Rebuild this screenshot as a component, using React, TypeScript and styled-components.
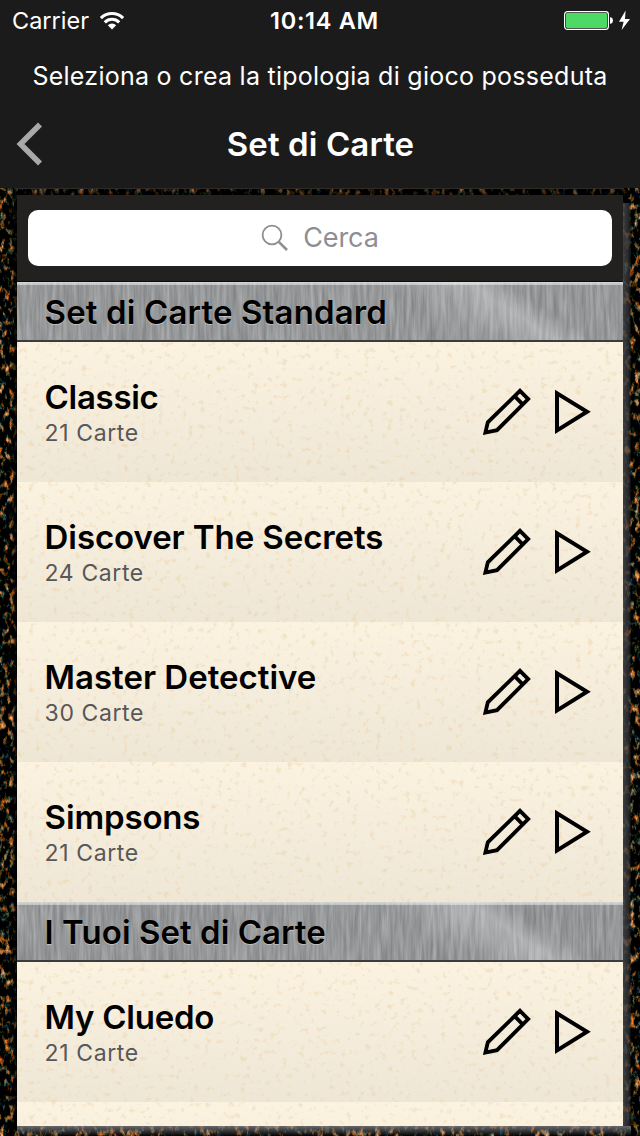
import React from 'react';
import styled, { createGlobalStyle } from 'styled-components';

const GlobalStyle = createGlobalStyle`
  * { box-sizing: border-box; }
  body { margin: 0; background: #050403; font-family: Inter, "Liberation Sans", sans-serif; }
`;

const Screen = styled.main`
  width: 640px;
  height: 1136px;
  overflow: hidden;
  display: flex;
  flex-direction: column;
  background: #1b1b1b;
`;

const StatusBar = styled.div`
  height: 41px;
  padding: 0 9px 0 12px;
  display: grid;
  grid-template-columns: 1fr auto 1fr;
  align-items: center;
  color: #fff;
`;

const StatusGroup = styled.div<{ $end?: boolean }>`
  display: flex;
  align-items: center;
  justify-content: ${(p) => (p.$end ? 'flex-end' : 'flex-start')};
`;

const Label = styled.span<{ $size: number; $weight?: number; $spacing?: number; $color?: string }>`
  font-size: ${(p) => p.$size}px;
  font-weight: ${(p) => p.$weight ?? 400};
  letter-spacing: ${(p) => p.$spacing ?? 0}px;
  color: ${(p) => p.$color ?? '#fff'};
  line-height: 1.2;
  white-space: nowrap;
`;

const Clock = styled(Label)`
  padding: 2px 0 0 6px;
`;

const Carrier = styled(Label)`
  padding-top: 2px;
`;

const Prompt = styled.div`
  height: 71px;
  padding-bottom: 2px;
  display: flex;
  align-items: center;
  justify-content: center;
`;

const NavBar = styled.header`
  height: 76px;
  padding: 0 16px 12px;
  display: grid;
  grid-template-columns: 28px 1fr 28px;
  align-items: center;
  justify-items: center;
`;

const NavTitle = styled(Label)`
  padding: 1px 0 0 1px;
`;

const Stage = styled.div`
  position: relative;
  flex: 1;
  padding: 7px 17px 10px 17px;
  background: #060403;
  overflow: hidden;
`;

const Texture = styled.svg`
  position: absolute;
  inset: 0;
  width: 100%;
  height: 100%;
  pointer-events: none;
`;

const TopShade = styled.div`
  position: absolute;
  inset: 0 16px auto 14px;
  height: 8px;
  border-top: 1px solid #2e2a28;
  background: linear-gradient(rgba(0, 0, 0, 0.35), rgba(0, 0, 0, 0.7));
`;

const LeftShade = styled.div`
  position: absolute;
  inset: 7px auto 10px 11px;
  width: 6px;
  background: linear-gradient(90deg, transparent, rgba(0, 0, 0, 0.9));
`;

const RightBevel = styled.div`
  position: absolute;
  right: 9px;
  top: 15px;
  bottom: 10px;
  width: 8px;
  background: linear-gradient(90deg, rgba(75, 76, 80, 0.8), rgba(50, 51, 54, 0.75) 70%, rgba(30, 30, 32, 0.3));
`;

const BottomBevel = styled.div`
  position: absolute;
  left: 17px;
  right: 9px;
  bottom: 0;
  height: 10px;
  background: linear-gradient(rgba(130, 130, 135, 0.8), rgba(20, 20, 22, 0.1));
`;

const Panel = styled.section`
  position: relative;
  height: 100%;
  overflow: hidden;
  display: flex;
  flex-direction: column;
`;

const SearchBar = styled.div`
  flex: none;
  height: 87px;
  padding: 15px 11px 16px;
  background: #22211f;
  border-bottom: 1px solid #0c0c0c;
`;

const SearchField = styled.div`
  height: 56px;
  border-radius: 10px;
  background: #fff;
  display: flex;
  align-items: center;
  justify-content: center;
  gap: 14px;
`;

const SectionHeader = styled.h2`
  position: relative;
  flex: none;
  height: 60px;
  margin: 0;
  padding: 3px 0 0 27.6px;
  display: flex;
  align-items: center;
  overflow: hidden;
  background: #939597;
  border-bottom: 2px solid #3c3c3d;
`;

const HeaderGloss = styled.div`
  position: absolute;
  inset: 0;
  background:
    linear-gradient(rgba(255, 255, 255, 0.6), rgba(255, 255, 255, 0.4)) top / 100% 3px no-repeat,
    linear-gradient(34deg, transparent 28%, rgba(255, 255, 255, 0.1) 42%, rgba(255, 255, 255, 0.25) 58%, transparent 70%) 360px 0 / 220px 100% no-repeat;
`;

const HeaderText = styled(Label)`
  position: relative;
  text-shadow: 0 1px 0 rgba(255, 255, 255, 0.4);
`;

const Row = styled.article`
  position: relative;
  flex: none;
  height: 140px;
  padding: 0 32px 0 27.6px;
  display: flex;
  align-items: center;
  justify-content: space-between;
  background: linear-gradient(#fbf2e0, #efe7d6);
`;

const RowText = styled.div`
  position: relative;
  padding-top: 2px;
  display: flex;
  flex-direction: column;
  gap: 2px;
`;

const Actions = styled.div`
  position: relative;
  display: flex;
  align-items: center;
  gap: 24px;
`;

const WoodTexture = () => (
  <Texture>
    <filter id="wood" x="0" y="0" width="100%" height="100%" colorInterpolationFilters="sRGB">
      <feTurbulence type="fractalNoise" baseFrequency="0.2 0.12" numOctaves={4} seed={7} />
      <feColorMatrix values="3.4 0.4 0 0 -1.98  1.7 0.6 0 0 -1.12  0.8 0.7 0 0 -0.74  0 0 0 0 1" />
    </filter>
    <rect width="100%" height="100%" filter="url(#wood)" />
  </Texture>
);

const SteelTexture = ({ seed }: { seed: number }) => (
  <Texture>
    <filter id={`steel${seed}`} x="0" y="0" width="100%" height="100%" colorInterpolationFilters="sRGB">
      <feTurbulence type="fractalNoise" baseFrequency="0.3 0.025" numOctaves={3} seed={seed} />
      <feColorMatrix values="0.24 0 0 0 0.465  0.24 0 0 0 0.473  0.24 0 0 0 0.48  0 0 0 0 1" />
    </filter>
    <rect width="100%" height="100%" filter={`url(#steel${seed})`} />
  </Texture>
);

const PaperTexture = ({ seed }: { seed: number }) => (
  <Texture>
    <filter id={`paper${seed}`} x="0" y="0" width="100%" height="100%" colorInterpolationFilters="sRGB">
      <feTurbulence type="fractalNoise" baseFrequency="0.17" numOctaves={3} seed={seed} />
      <feColorMatrix values="0 0 0 0 0.91  0 0 0 0 0.8  0 0 0 0 0.62  5 0 0 0 -2.95" />
    </filter>
    <rect width="100%" height="100%" opacity="0.38" filter={`url(#paper${seed})`} />
  </Texture>
);

const WifiGlyph = styled.svg`
  margin-left: 10px;
`;

const WifiIcon = () => (
  <WifiGlyph width="26" height="20" viewBox="0 0 26 20" fill="none" stroke="#fff" strokeWidth="3.1">
    <path d="M1.9 7.2a15.6 15.6 0 0 1 22.2 0" />
    <path d="M5.8 11.3a10.2 10.2 0 0 1 14.4 0" />
    <path d="M13 18.6l-4.2-4.4a6 6 0 0 1 8.4 0z" fill="#fff" stroke="none" />
  </WifiGlyph>
);

const BatteryIcon = () => (
  <svg width="67" height="22" viewBox="0 0 67 22" fill="none">
    <rect x="0.6" y="1.6" width="43.8" height="17.8" rx="2.8" stroke="#fff" strokeWidth="1.2" />
    <rect x="2" y="3" width="41" height="15" rx="1.4" fill="#4cd964" />
    <path d="M46 7.2h1q2 1 2 3.3t-2 3.3h-1z" fill="#fff" />
    <path d="M61.6 0.5L55 11.7h4.6L57.6 20 66 8.9h-5z" fill="#fff" />
  </svg>
);

const BackIcon = () => (
  <svg width="28" height="44" viewBox="0 0 28 44" fill="none" stroke="#a9a9a9" strokeWidth="5.6">
    <path d="M24 2.5L4.5 22 24 41.5" />
  </svg>
);

const SearchIcon = () => (
  <svg width="28" height="28" viewBox="0 0 28 28" fill="none" stroke="#8e8e93">
    <circle cx="11" cy="11" r="9.4" strokeWidth="1.8" />
    <path d="M17.8 17.8l8.2 8.2" strokeWidth="2.6" />
  </svg>
);

const PencilIcon = () => (
  <svg width="48" height="48" viewBox="0 0 48 48" fill="none" stroke="#000" strokeWidth="3.8">
    <path d="M37 2.8L45.2 11.1 14 42.2 2.4 44.6 4.8 34.3z" />
    <path d="M31.8 8.3L40 16.6" />
  </svg>
);

const PlayIcon = () => (
  <svg width="36" height="46" viewBox="0 0 36 46" fill="none" stroke="#000" strokeWidth="4">
    <path d="M2 4.4v37L32 22.8z" />
  </svg>
);

interface CardSet {
  name: string;
  count: number;
  spacing?: number;
}

const standardSets: CardSet[] = [
  { name: 'Classic', count: 21, spacing: -0.3 },
  { name: 'Discover The Secrets', count: 24, spacing: -0.08 },
  { name: 'Master Detective', count: 30 },
  { name: 'Simpsons', count: 21, spacing: -0.15 },
];

const CardRow = ({ set, seed }: { set: CardSet; seed: number }) => (
  <Row>
    <PaperTexture seed={seed} />
    <RowText>
      <Label $size={33} $weight={600} $color="#000" $spacing={set.spacing}>{set.name}</Label>
      <Label $size={23} $color="#57575a" $spacing={0.6}>{set.count} Carte</Label>
    </RowText>
    <Actions>
      <PencilIcon />
      <PlayIcon />
    </Actions>
  </Row>
);

const Section = ({ title, seed, spacing }: { title: string; seed: number; spacing?: number }) => (
  <SectionHeader>
    <SteelTexture seed={seed} />
    <HeaderGloss />
    <HeaderText $size={33} $weight={600} $color="#000" $spacing={spacing}>{title}</HeaderText>
  </SectionHeader>
);

export default function App() {
  return (
    <Screen>
      <GlobalStyle />
      <StatusBar>
        <StatusGroup>
          <Carrier $size={23.5}>Carrier</Carrier>
          <WifiIcon />
        </StatusGroup>
        <Clock $size={23.5} $weight={600} $spacing={0.7}>10:14 AM</Clock>
        <StatusGroup $end>
          <BatteryIcon />
        </StatusGroup>
      </StatusBar>
      <Prompt>
        <Label $size={25} $spacing={0.26}>Seleziona o crea la tipologia di gioco posseduta</Label>
      </Prompt>
      <NavBar>
        <BackIcon />
        <NavTitle $size={33} $weight={600} $spacing={0.1}>Set di Carte</NavTitle>
      </NavBar>
      <Stage>
        <WoodTexture />
        <TopShade />
        <LeftShade />
        <RightBevel />
        <BottomBevel />
        <Panel>
          <SearchBar>
            <SearchField>
              <SearchIcon />
              <Label $size={27} $color="#8e8e93" $spacing={-0.1}>Cerca</Label>
            </SearchField>
          </SearchBar>
          <Section title="Set di Carte Standard" seed={3} spacing={0.14} />
          {standardSets.map((set, i) => (
            <CardRow key={set.name} set={set} seed={11 + i} />
          ))}
          <Section title="I Tuoi Set di Carte" seed={5} spacing={0.04} />
          <CardRow set={{ name: 'My Cluedo', count: 21, spacing: -0.25 }} seed={20} />
          <Row>
            <PaperTexture seed={21} />
          </Row>
        </Panel>
      </Stage>
    </Screen>
  );
}
